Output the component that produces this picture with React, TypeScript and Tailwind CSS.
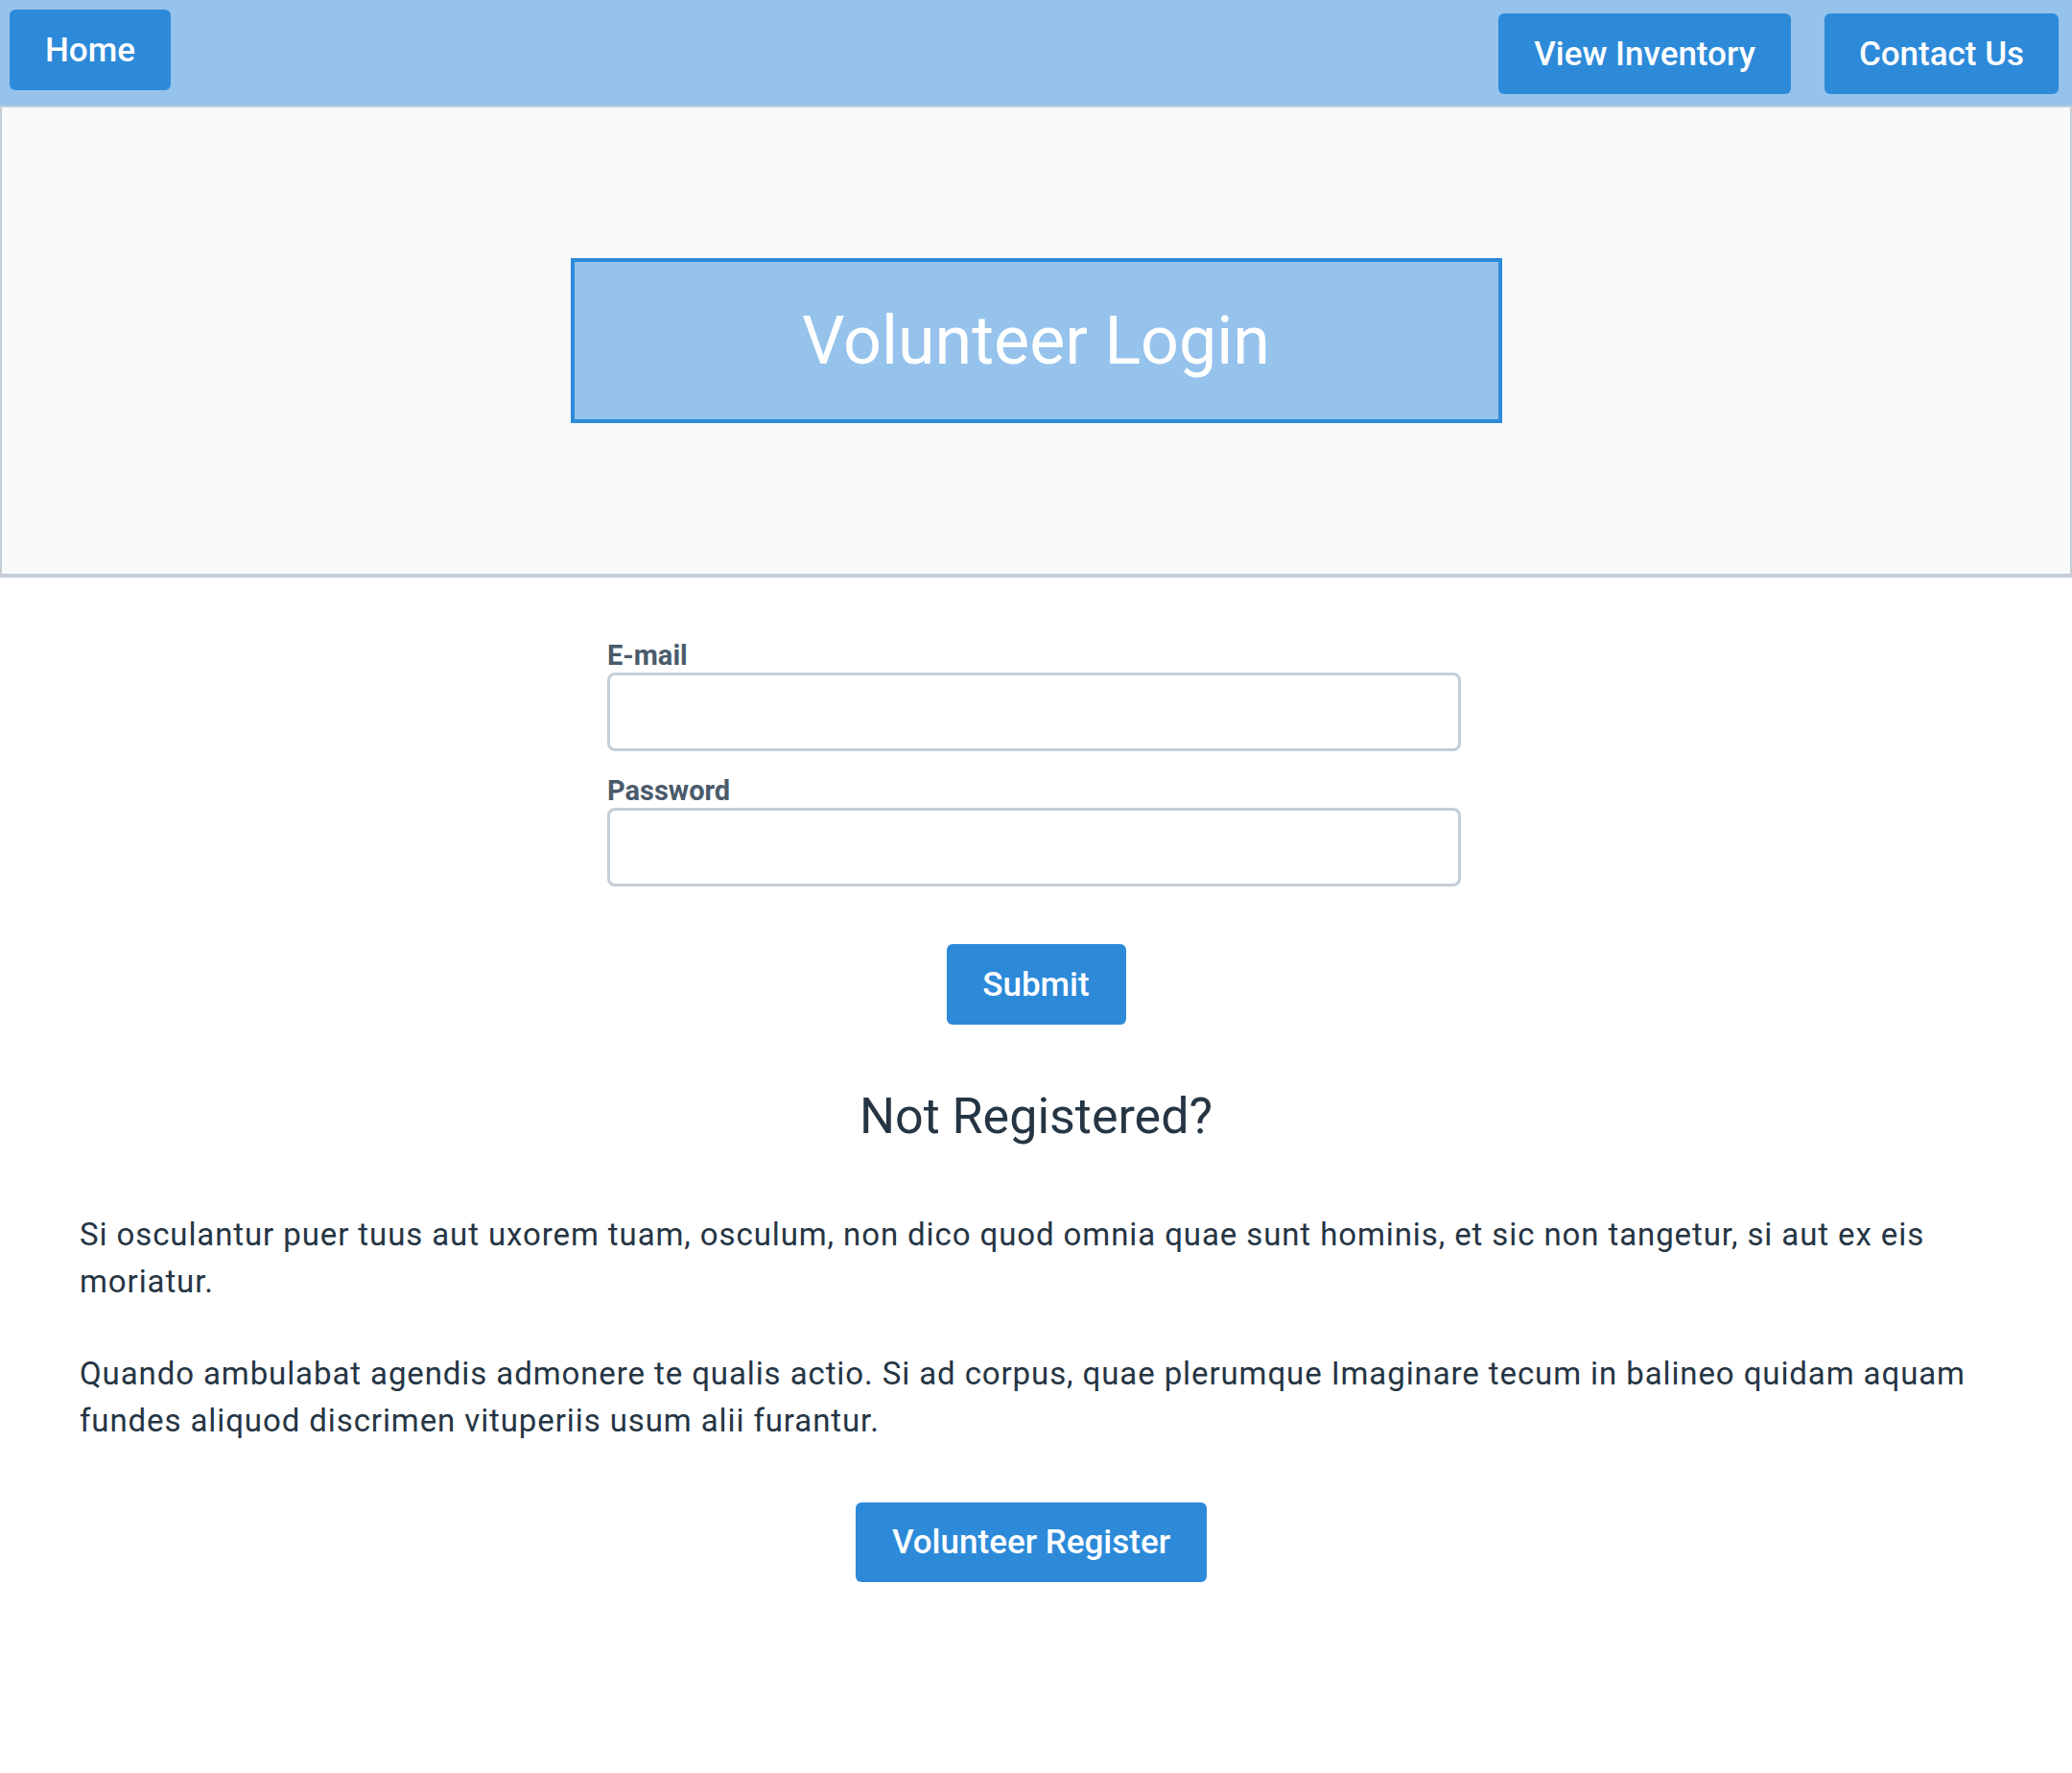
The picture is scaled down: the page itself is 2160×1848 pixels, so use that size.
const NAV_RIGHT = [
  { label: "View Inventory", w: "w-[305px]" },
  { label: "Contact Us", w: "w-[244px]" },
];

const btn =
  "bg-[#2d8ad9] text-white rounded-md font-medium text-[35px] leading-none flex items-center justify-center";

export default function App() {
  return (
    <div className="min-h-screen bg-white font-['Roboto',sans-serif] text-[#253544]">
      <header className="h-[112px] bg-[#95c3ec] border-b-2 border-[#c4ced8] flex items-start justify-between">
        <a className={`${btn} ml-[10px] mt-[10px] h-[84px] w-[168px]`}>Home</a>
        <nav className="flex gap-[35px] mt-[14px] mr-[14px]">
          {NAV_RIGHT.map((item) => (
            <a key={item.label} className={`${btn} h-[84px] ${item.w}`}>
              {item.label}
            </a>
          ))}
        </nav>
      </header>

      <section className="h-[490px] bg-[#f7f9fb] border-x-2 border-b-4 border-[#c4ced8] flex items-center justify-center">
        <div className="w-[971px] h-[172px] bg-[#95c3ec] border-4 border-[#2d8ad9] flex items-center justify-center">
          <h1 className="text-white text-[70px] leading-none font-normal">Volunteer Login</h1>
        </div>
      </section>

      <form className="w-[890px] mx-auto mt-[64px] flex flex-col -translate-x-[2px]">
        <label className="text-[29px] leading-[34px] font-bold text-[#4a5b6b] mb-[1px]">E-mail</label>
        <input
          type="email"
          className="h-[82px] border-[3px] border-[#c4ced8] rounded-lg bg-white px-3 text-[30px] outline-none"
        />
        <label className="text-[29px] leading-[34px] font-bold text-[#4a5b6b] mt-[24px] mb-[1px]">
          Password
        </label>
        <input
          type="password"
          className="h-[82px] border-[3px] border-[#c4ced8] rounded-lg bg-white px-3 text-[30px] outline-none"
        />
        <button type="button" className={`${btn} self-center mt-[60px] h-[84px] w-[187px] translate-x-[2px]`}>
          Submit
        </button>
      </form>

      <h2 className="mt-[66px] text-center text-[52px] leading-[60px] font-normal">Not Registered?</h2>

      <div className="px-[83px] mt-[68px] text-[33px] leading-[49px] tracking-[0.9px] flex flex-col gap-[47px]">
        <p>
          Si osculantur puer tuus aut uxorem tuam, osculum, non dico quod omnia quae sunt hominis, et sic non
          tangetur, si aut ex eis moriatur.
        </p>
        <p>
          Quando ambulabat agendis admonere te qualis actio. Si ad corpus, quae plerumque Imaginare tecum in
          balineo quidam aquam fundes aliquod discrimen vituperiis usum alii furantur.
        </p>
      </div>

      <div className="flex justify-center mt-[61px] pb-[199px]">
        <button type="button" className={`${btn} h-[83px] w-[366px] -translate-x-[5px]`}>
          Volunteer Register
        </button>
      </div>
    </div>
  );
}
